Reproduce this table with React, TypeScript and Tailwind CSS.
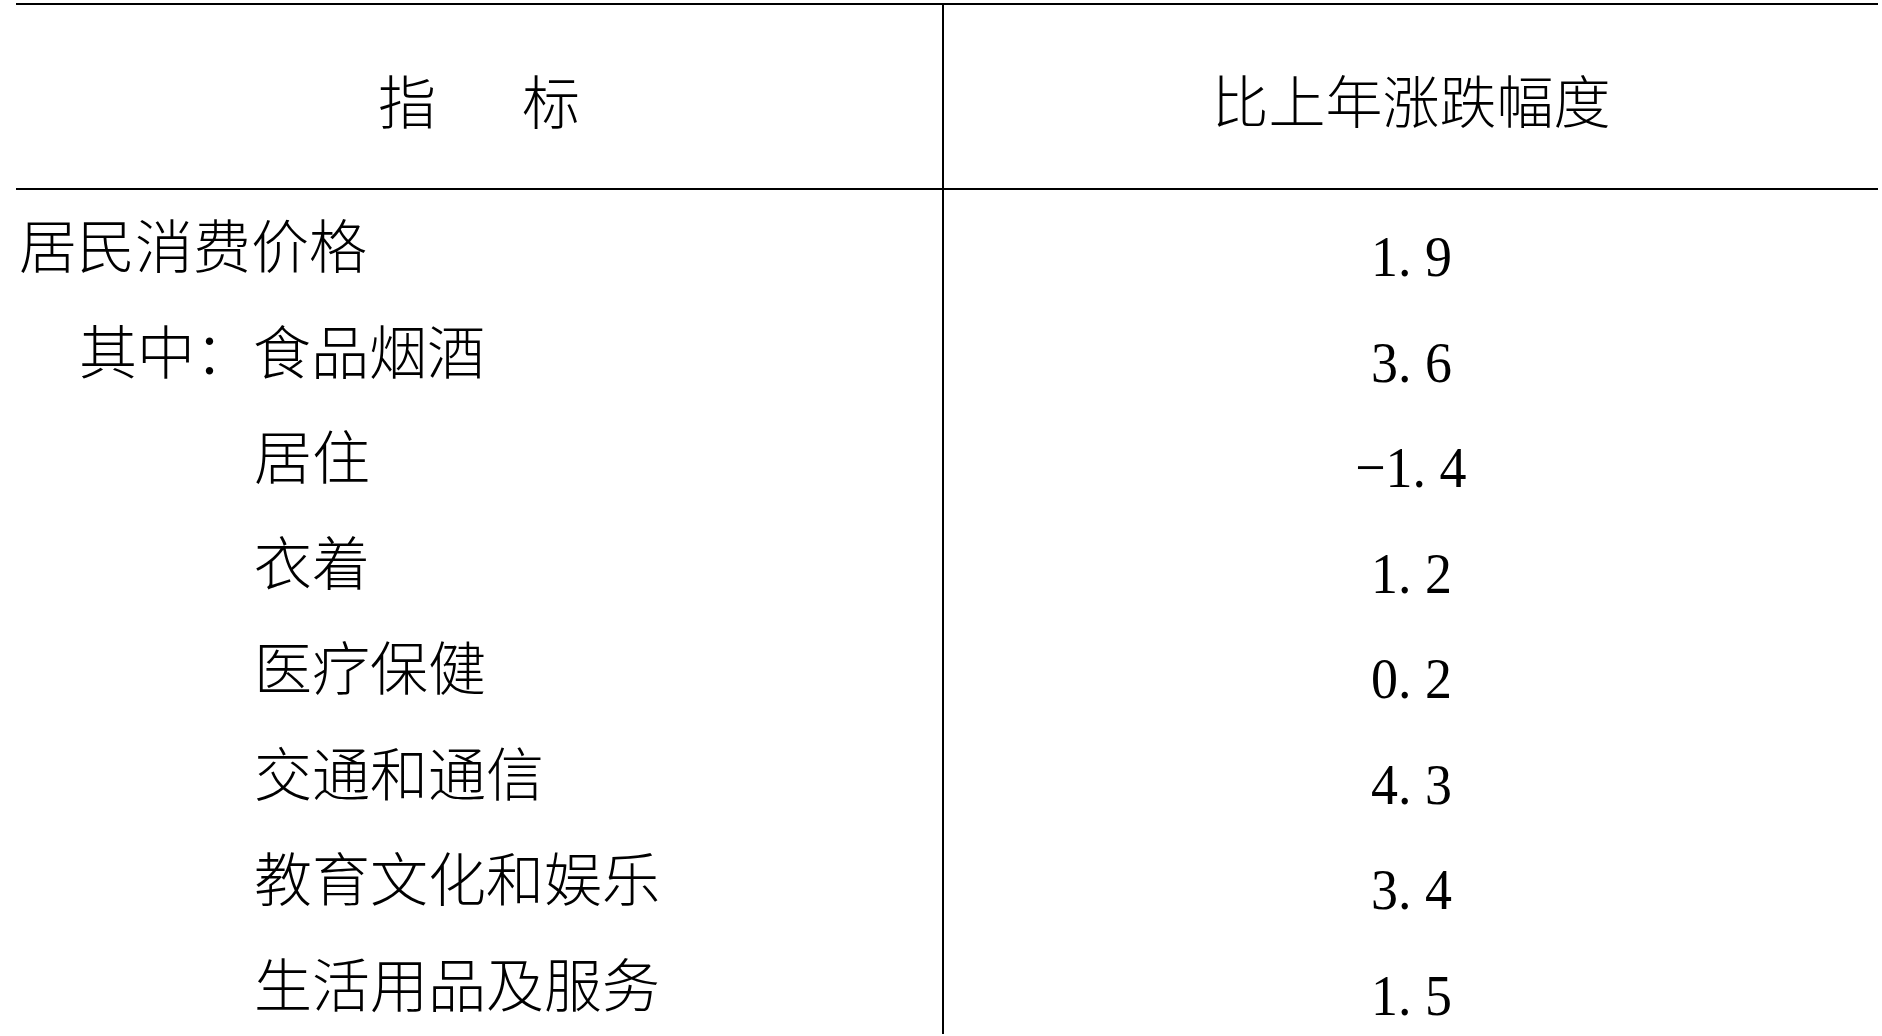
import React from "react";

const cjk = "font-['Noto_Sans_CJK_SC','Noto_Sans_CJK_JP',sans-serif]";
const num = "font-['Liberation_Serif','Times_New_Roman',serif]";

type Row = { label: string; indent: 0 | 1 | 4; value: string };

const rows: Row[] = [
  { label: "居民消费价格", indent: 0, value: "1. 9" },
  { label: "其中：食品烟酒", indent: 1, value: "3. 6" },
  { label: "居住", indent: 4, value: "−1. 4" },
  { label: "衣着", indent: 4, value: "1. 2" },
  { label: "医疗保健", indent: 4, value: "0. 2" },
  { label: "交通和通信", indent: 4, value: "4. 3" },
  { label: "教育文化和娱乐", indent: 4, value: "3. 4" },
  { label: "生活用品及服务", indent: 4, value: "1. 5" },
];

const indentClass: Record<number, string> = {
  0: "pl-[3px]",
  1: "pl-[63px]",
  4: "pl-[238px]",
};

export default function App() {
  return (
    <div className="w-[1882px] h-[1036px] overflow-hidden bg-white pt-[3px] pl-4 text-black">
      <div className="w-[1862px] border-t-2 border-black">
        <div className="grid grid-cols-[928px_934px]">
          <div
            className={`h-[185px] border-r-2 border-b-2 border-black flex justify-center items-start pt-[65px] text-[58px] leading-none font-light ${cjk}`}
          >
            <div className="flex gap-[86px]">
              <span>指</span>
              <span>标</span>
            </div>
          </div>
          <div
            className={`h-[185px] border-b-2 border-black flex justify-center items-start pt-[65px] text-[57px] leading-none font-light ${cjk}`}
          >
            比上年涨跌幅度
          </div>

          {rows.map((r) => (
            <React.Fragment key={r.label}>
              <div
                className={`h-[105.5px] border-r-2 border-black pt-[24px] text-[58px] leading-none font-light whitespace-nowrap ${cjk} ${indentClass[r.indent]}`}
              >
                {r.label}
              </div>
              <div
                className={`h-[105.5px] flex justify-center items-start pt-[38px] text-[58px] leading-none whitespace-pre ${num}`}
              >
                <span className="inline-block scale-x-[0.93]">{r.value}</span>
              </div>
            </React.Fragment>
          ))}
        </div>
      </div>
    </div>
  );
}
